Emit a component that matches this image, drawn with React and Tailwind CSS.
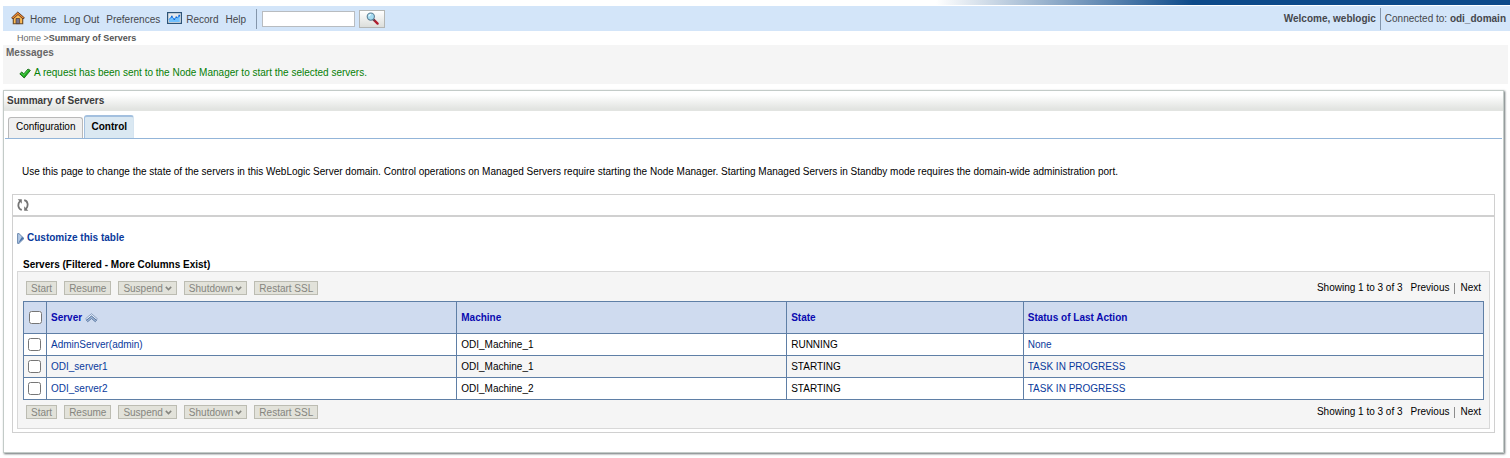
import { useState } from "react";

const servers = [
  { name: "AdminServer(admin)", machine: "ODI_Machine_1", state: "RUNNING", status: "None" },
  { name: "ODI_server1", machine: "ODI_Machine_1", state: "STARTING", status: "TASK IN PROGRESS" },
  { name: "ODI_server2", machine: "ODI_Machine_2", state: "STARTING", status: "TASK IN PROGRESS" },
];

function HomeIcon() {
  return (
    <svg width="14" height="14" viewBox="0 0 14 14" className="mb-1" aria-hidden="true">
      <path d="M2.300 6.500 7 2.200l4.700 4.300v6.300H2.300z" fill="#fdbb55" stroke="#6b4a26" strokeWidth="1.100" />
      <path d="M6.800 1 .6 6.800 2 8l5-4.500L12 8l1.400-1.200z" fill="#f58a2c" stroke="#5a3c28" strokeWidth=".9" strokeLinejoin="round" />
      <path d="M5 7.500h3.600v5.100H5z" fill="#77738e" stroke="#4c3a2c" strokeWidth=".7" />
    </svg>
  );
}

function RecordIcon() {
  return (
    <svg width="15" height="12" viewBox="0 0 15 12" className="mb-1" aria-hidden="true">
      <rect x=".6" y=".6" width="13.800" height="10.800" fill="#e4e8ec" stroke="#2d5478" strokeWidth="1.200" />
      <path d="M2 10V7.200L4.800 4.200l2.600 3L9.200 5l1.200.6L12.800 3v7z" fill="#6fc0ff" />
      <path d="M2 7.500 4.800 4.600l2.600 2.800L9.200 5.200l1.200.8 2.400-2.600" fill="none" stroke="#2a86ea" strokeWidth="1" />
      <path d="M4 3.800h1.600v1.600H4zM6.600 6.400h1.500v1.500H6.600zM8.600 4.400h1.500V6H8.600zM11.400 2.800H13v1.600h-1.600z" fill="#1266d6" />
    </svg>
  );
}

function SearchIcon() {
  return (
    <svg width="13" height="13" viewBox="0 0 13 13" aria-hidden="true">
      <path d="m7.600 7.600 4 4" stroke="#b01c2e" strokeWidth="2.300" strokeLinecap="round" />
      <path d="m7 7 1.600 1.600" stroke="#4a4a55" strokeWidth="1.600" />
      <circle cx="4.800" cy="4.600" r="3.600" fill="#a6dcf2" stroke="#5b7f95" strokeWidth="1.100" />
      <path d="M2.800 4.400c.2-1.200 1-1.800 2.200-1.900" fill="none" stroke="#f2fbff" strokeWidth="1.100" />
    </svg>
  );
}

function CheckIcon() {
  return (
    <svg width="12" height="11" viewBox="0 0 12 11" aria-hidden="true">
      <path d="M.8 5.800 2.800 4l2 1.900L9 1l2.400 1.400L5.200 10z" fill="#1fb01f" stroke="#176a17" strokeWidth=".9" strokeLinejoin="round" />
      <path d="m2.200 5.200 2.500 2.100 4.600-5.500" fill="none" stroke="#5ed65e" strokeWidth=".8" />
    </svg>
  );
}

function RefreshIcon() {
  return (
    <svg width="12" height="12" viewBox="0 0 12 12" aria-hidden="true">
      <g fill="none" stroke="#747474" strokeWidth="1.800">
        <path d="M4.800 10.900C1 10.200.3 5.200 3 2" />
        <path d="M7.200 1.100C11 1.800 11.700 6.800 9 10" />
      </g>
      <path d="M.7.300h4.100v4.400zM11.300 11.700H7.200V7.300z" fill="#747474" />
    </svg>
  );
}

function ExpandIcon() {
  return (
    <svg width="8" height="11" viewBox="0 0 8 11" aria-hidden="true">
      <path d="M.6.600H2l5 4.900-5 4.900H.6z" fill="#b4cae6" stroke="#5f7fa8" strokeWidth=".9" />
      <path d="M1.200 10 6.800 5.500 5 3.700z" fill="#4a72a8" />
    </svg>
  );
}

function SortIcon() {
  return (
    <svg width="13" height="10" viewBox="0 0 13 10" aria-hidden="true">
      <path d="M.7 5.700 6.500.7l5.800 5-1 1.200-4.800-4-4.800 4z" fill="#e6eef9" stroke="#6b86af" strokeWidth=".7" />
      <path d="M1.500 7.300 6.500 3.200l5 4.100-1.200 1.400-3.800-3.200-3.800 3.200z" fill="#a5bbd9" stroke="#4a6a97" strokeWidth=".8" />
    </svg>
  );
}

function ChevronIcon() {
  return (
    <svg width="7" height="5" viewBox="0 0 7 5" aria-hidden="true">
      <path d="M.8.900 3.500 3.600 6.200.9" fill="none" stroke="#85857f" strokeWidth="1.500" />
    </svg>
  );
}

const actions = [
  { label: "Start" },
  { label: "Resume" },
  { label: "Suspend", menu: true },
  { label: "Shutdown", menu: true },
  { label: "Restart SSL" },
];

function ActionBar() {
  return (
    <div className="flex items-center justify-between px-[3px]">
      <div className="flex gap-[7px]">
        {actions.map((action) => (
          <button
            key={action.label}
            type="button"
            disabled
            className="flex h-[14px] items-center gap-[2px] whitespace-nowrap border border-[#bcbcb2] bg-[#e2e2da] px-[4px] leading-[13px] text-[#85857f]"
          >
            {action.label}
            {action.menu && <ChevronIcon />}
          </button>
        ))}
      </div>
      <div className="flex h-[14px] items-center leading-4">
        <span className="mr-2">Showing 1 to 3 of 3</span>
        <span>Previous</span>
        <span className="mx-[5px] h-[11px] w-px bg-[#8c8c8c]" />
        <span>Next</span>
      </div>
    </div>
  );
}

function HeaderLink({ children }) {
  return (
    <a href="#sort" className="flex w-fit items-center gap-[3px] text-[#0a0ab0]">
      {children}
    </a>
  );
}

export default function App() {
  const [selected, setSelected] = useState([]);
  const toggle = (name) =>
    setSelected((rows) => (rows.includes(name) ? rows.filter((row) => row !== name) : [...rows, name]));

  const cell = "border border-[#5f7fa6] px-[4px]";

  return (
    <div className="min-w-[900px] bg-white pb-1 font-['Liberation_Sans',Arial,sans-serif] text-[10px] leading-[14px] text-black">
      <div className="h-[5px] bg-[linear-gradient(to_right,#fff_62%,#0d4a8a_79%)]" />
      <header className="ml-[3px] mt-px flex h-[25px] items-center justify-between bg-[#d3e5f9] text-[#45474c]">
        <div className="flex h-full items-center">
          <nav className="flex items-center gap-[7px] pl-2 pt-[2px]">
            <a href="#home" className="flex items-center gap-[5px]">
              <HomeIcon />
              Home
            </a>
            <a href="#logout">Log Out</a>
            <a href="#preferences">Preferences</a>
            <a href="#record" className="flex items-center gap-[4px]">
              <RecordIcon />
              Record
            </a>
            <a href="#help">Help</a>
          </nav>
          <form className="ml-[10px] flex h-5 items-center gap-[4px] border-l border-[#8496ab] pl-[5px]" onSubmit={(e) => e.preventDefault()}>
            <input
              type="text"
              aria-label="Search"
              className="h-4 w-[93px] border border-[#b8bcc0] bg-white px-1 outline-none"
            />
            <button
              type="submit"
              aria-label="Search"
              className="flex h-[18px] w-[26px] items-center justify-center border border-[#b4b6b4] bg-linear-to-b from-white to-[#dcdedb]"
            >
              <SearchIcon />
            </button>
          </form>
        </div>
        <div className="flex items-center pr-[4px]">
          <span className="pr-[4px] font-bold">Welcome, weblogic</span>
          <span className="border-l border-[#8496ab] py-1 pl-[4px]">
            Connected to: <b>odi_domain</b>
          </span>
        </div>
      </header>

      <div className="pl-[17px] text-[9px] text-[#666]">
        <a href="#home">Home</a> &gt;<b className="text-[#555]">Summary of Servers</b>
      </div>

      <section className="ml-[3px] mr-[2px] bg-[#f5f5f5] pb-[4px] pt-px">
        <h2 className="pl-[3px] font-bold text-[#666]">Messages</h2>
        <p className="flex items-center gap-[3px] pl-4 pt-[6px] text-[#068006]">
          <CheckIcon />
          A request has been sent to the Node Manager to start the selected servers.
        </p>
      </section>

      <main className="ml-[3px] mr-[6px] mt-[6px] border border-[#c3cbc8] bg-white pb-[19px] shadow-[1px_1px_2px_0px_#666e70]">
        <h1 className="bg-linear-to-b from-white from-20% to-[#e2e4e1] to-90% pb-[3px] pl-[3px] pt-[3px] font-bold text-[#3c3c3c]">
          Summary of Servers
        </h1>
        <div className="mx-px flex items-end gap-px border-b border-[#93b5d9] pl-[3px] pt-1">
          <button type="button" className="h-[21px] rounded-t-[3px] border border-b-0 border-[#b9b9b9] bg-[#f0f0f0] px-[7px] pb-[2px]">
            Configuration
          </button>
          <button type="button" className="h-[23px] rounded-t-[3px] border border-t-2 border-b-0 border-[#a3c0df] border-r-[#d5e4f0] bg-[#dae8f2] px-[6px] pb-px font-bold">
            Control
          </button>
        </div>

        <p className="mt-[26px] pl-[18px]">
          Use this page to change the state of the servers in this WebLogic Server domain. Control operations on
          Managed Servers require starting the Node Manager. Starting Managed Servers in Standby mode requires the
          domain-wide administration port.
        </p>

        <div className="mx-2 mt-[15px] border border-[#d0d0d0]">
          <div className="flex h-[22px] items-center border-b-2 border-[#d0d0d0] pl-[4px]">
            <button type="button" aria-label="Refresh">
              <RefreshIcon />
            </button>
          </div>
          <div className="px-[4px] pb-[3px] pt-[14px]">
            <a href="#customize" className="flex h-[14px] w-fit items-center gap-[2px] font-bold leading-4 text-[#0a3a9c]">
              <ExpandIcon />
              Customize this table
            </a>
            <h2 className="h-[26px] pl-[6px] pt-[13px] font-bold">Servers (Filtered - More Columns Exist)</h2>

            <div className="border border-[#d8d8d8] bg-[#f5f5f5] px-[5px] py-[9px]">
              <ActionBar />
              <table className="mb-[5px] mt-[6px] w-full table-fixed border-collapse border border-[#5f7fa6] text-left">
                <colgroup>
                  <col className="w-[23px]" />
                  <col className="w-[28.1%]" />
                  <col className="w-[22.6%]" />
                  <col className="w-[16.2%]" />
                  <col />
                </colgroup>
                <thead>
                  <tr className="h-8 bg-[#cfdbef] font-bold">
                    <th className="border border-[#5f7fa6] pl-[5px]">
                      <input
                        type="checkbox"
                        aria-label="Select all servers"
                        className="block size-[13px]"
                        checked={selected.length === servers.length}
                        onChange={(e) => setSelected(e.target.checked ? servers.map((s) => s.name) : [])}
                      />
                    </th>
                    <th className={cell}>
                      <HeaderLink>
                        Server <SortIcon />
                      </HeaderLink>
                    </th>
                    <th className={cell}>
                      <HeaderLink>Machine</HeaderLink>
                    </th>
                    <th className={cell}>
                      <HeaderLink>State</HeaderLink>
                    </th>
                    <th className={cell}>
                      <HeaderLink>Status of Last Action</HeaderLink>
                    </th>
                  </tr>
                </thead>
                <tbody>
                  {servers.map((server) => (
                    <tr key={server.name} className="h-[22px] bg-white even:bg-[#f5f5f5]">
                      <td className="border border-[#5f7fa6] pl-[4px]">
                        <input
                          type="checkbox"
                          aria-label={`Select ${server.name}`}
                          className="block size-[13px]"
                          checked={selected.includes(server.name)}
                          onChange={() => toggle(server.name)}
                        />
                      </td>
                      <td className={cell}>
                        <a href="#server" className="text-[#0a3a9c]">{server.name}</a>
                      </td>
                      <td className={cell}>{server.machine}</td>
                      <td className={cell}>{server.state}</td>
                      <td className={cell}>
                        <a href="#status" className="text-[#0a3a9c]">{server.status}</a>
                      </td>
                    </tr>
                  ))}
                </tbody>
              </table>
              <ActionBar />
            </div>
          </div>
        </div>
      </main>
    </div>
  );
}
